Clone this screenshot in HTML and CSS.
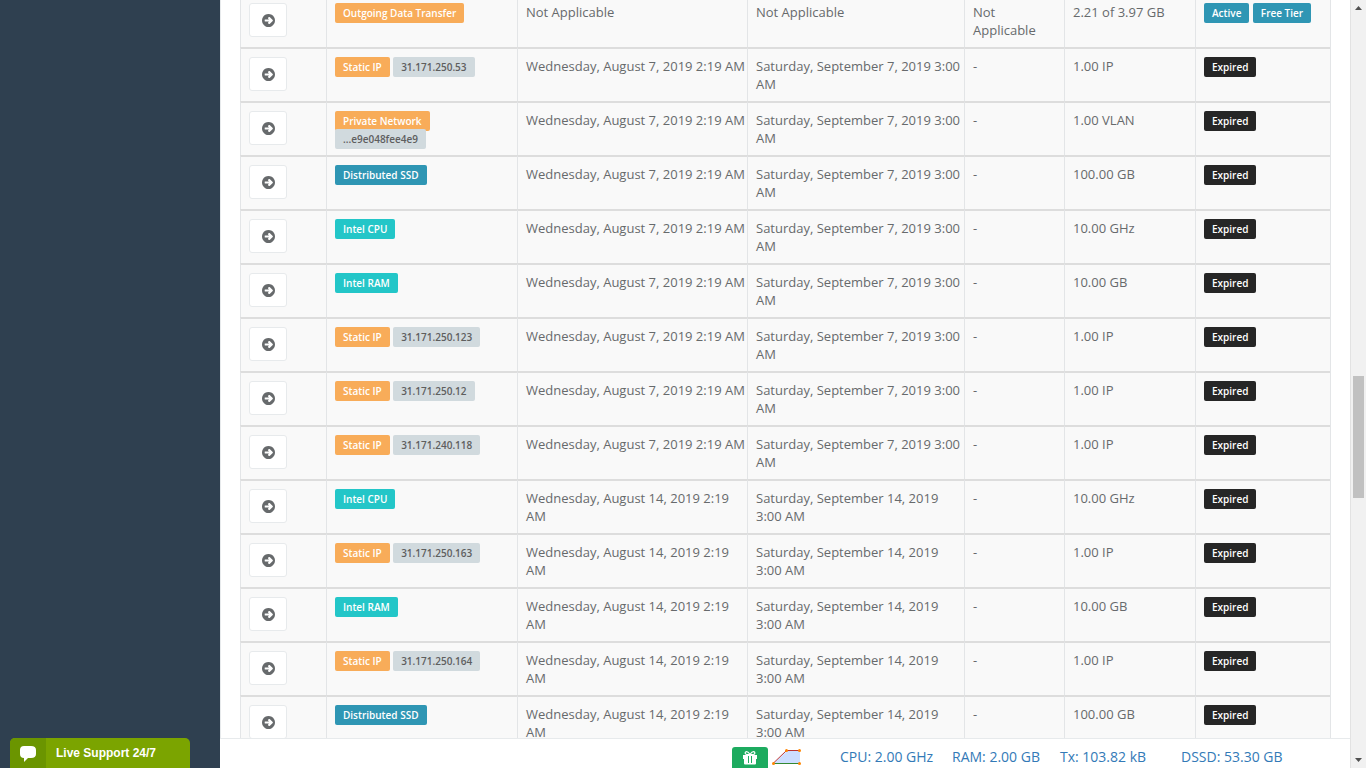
FILE: index.html
```html
<!DOCTYPE html>
<html lang="en">
<head>
<meta charset="utf-8">
<title>Subscriptions</title>
<link rel="stylesheet" href="styles.css">
</head>
<body>
<svg class="sprite" aria-hidden="true">
  <symbol id="arrow" viewBox="0 0 1536 1536"><path fill="currentColor" d="M1285 768q0-27-18-45L904 360q-18-18-45-18t-45 18l-91 91q-18 18-18 45t18 45l99 99H384q-26 0-45 19t-19 45v128q0 26 19 45t45 19h438l-99 99q-19 19-19 45t19 45l91 91q18 18 45 18t45-18l363-363q18-18 18-45zm251 0q0 209-103 385.500T1153.500 1433 768 1536t-385.500-103T103 1153.500 0 768t103-385.500T382.500 103 768 0t385.500 103T1433 382.500 1536 768z"/></symbol>
</svg>
<div class="app">
  <aside class="sidebar">
    <button class="support" type="button">
      <span class="support-icon"><svg width="18" height="16" viewBox="0 0 18 16" aria-hidden="true"><path fill="#fff" d="M5 0h7q5 0 5 4v4q0 4-5 4H9l-4 4v-4Q1 12 1 8V4q0-4 4-4z"/></svg></span>
      <span class="support-text">Live Support 24/7</span>
    </button>
  </aside>
  <div class="page">
    <main class="content">
      <table class="subs">
        <colgroup><col class="c-open"><col class="c-resource"><col class="c-start"><col class="c-end"><col class="c-renew"><col class="c-amount"><col class="c-status"></colgroup>
        <tbody>
          <tr><td><button class="open" type="button" aria-label="Open"><svg><use href="#arrow"/></svg></button></td><td><span class="label orange">Outgoing Data Transfer</span></td><td class="date">Not Applicable</td><td class="date">Not Applicable</td><td>Not Applicable</td><td>2.21 of 3.97 GB</td><td><span class="label blue">Active</span> <span class="label blue">Free Tier</span></td></tr>
          <tr><td><button class="open" type="button" aria-label="Open"><svg><use href="#arrow"/></svg></button></td><td><span class="label orange">Static IP</span> <span class="label grey">31.171.250.53</span></td><td class="date">Wednesday, August 7, 2019 2:19 AM</td><td class="date">Saturday, September 7, 2019 3:00 AM</td><td>-</td><td>1.00 IP</td><td><span class="label black">Expired</span></td></tr>
          <tr><td><button class="open" type="button" aria-label="Open"><svg><use href="#arrow"/></svg></button></td><td><span class="label orange">Private Network</span> <span class="label grey">...e9e048fee4e9</span></td><td class="date">Wednesday, August 7, 2019 2:19 AM</td><td class="date">Saturday, September 7, 2019 3:00 AM</td><td>-</td><td>1.00 VLAN</td><td><span class="label black">Expired</span></td></tr>
          <tr><td><button class="open" type="button" aria-label="Open"><svg><use href="#arrow"/></svg></button></td><td><span class="label blue">Distributed SSD</span></td><td class="date">Wednesday, August 7, 2019 2:19 AM</td><td class="date">Saturday, September 7, 2019 3:00 AM</td><td>-</td><td>100.00 GB</td><td><span class="label black">Expired</span></td></tr>
          <tr><td><button class="open" type="button" aria-label="Open"><svg><use href="#arrow"/></svg></button></td><td><span class="label teal">Intel CPU</span></td><td class="date">Wednesday, August 7, 2019 2:19 AM</td><td class="date">Saturday, September 7, 2019 3:00 AM</td><td>-</td><td>10.00 GHz</td><td><span class="label black">Expired</span></td></tr>
          <tr><td><button class="open" type="button" aria-label="Open"><svg><use href="#arrow"/></svg></button></td><td><span class="label teal">Intel RAM</span></td><td class="date">Wednesday, August 7, 2019 2:19 AM</td><td class="date">Saturday, September 7, 2019 3:00 AM</td><td>-</td><td>10.00 GB</td><td><span class="label black">Expired</span></td></tr>
          <tr><td><button class="open" type="button" aria-label="Open"><svg><use href="#arrow"/></svg></button></td><td><span class="label orange">Static IP</span> <span class="label grey">31.171.250.123</span></td><td class="date">Wednesday, August 7, 2019 2:19 AM</td><td class="date">Saturday, September 7, 2019 3:00 AM</td><td>-</td><td>1.00 IP</td><td><span class="label black">Expired</span></td></tr>
          <tr><td><button class="open" type="button" aria-label="Open"><svg><use href="#arrow"/></svg></button></td><td><span class="label orange">Static IP</span> <span class="label grey">31.171.250.12</span></td><td class="date">Wednesday, August 7, 2019 2:19 AM</td><td class="date">Saturday, September 7, 2019 3:00 AM</td><td>-</td><td>1.00 IP</td><td><span class="label black">Expired</span></td></tr>
          <tr><td><button class="open" type="button" aria-label="Open"><svg><use href="#arrow"/></svg></button></td><td><span class="label orange">Static IP</span> <span class="label grey">31.171.240.118</span></td><td class="date">Wednesday, August 7, 2019 2:19 AM</td><td class="date">Saturday, September 7, 2019 3:00 AM</td><td>-</td><td>1.00 IP</td><td><span class="label black">Expired</span></td></tr>
          <tr><td><button class="open" type="button" aria-label="Open"><svg><use href="#arrow"/></svg></button></td><td><span class="label teal">Intel CPU</span></td><td class="date">Wednesday, August 14, 2019 2:19 AM</td><td class="date">Saturday, September 14, 2019 3:00 AM</td><td>-</td><td>10.00 GHz</td><td><span class="label black">Expired</span></td></tr>
          <tr><td><button class="open" type="button" aria-label="Open"><svg><use href="#arrow"/></svg></button></td><td><span class="label orange">Static IP</span> <span class="label grey">31.171.250.163</span></td><td class="date">Wednesday, August 14, 2019 2:19 AM</td><td class="date">Saturday, September 14, 2019 3:00 AM</td><td>-</td><td>1.00 IP</td><td><span class="label black">Expired</span></td></tr>
          <tr><td><button class="open" type="button" aria-label="Open"><svg><use href="#arrow"/></svg></button></td><td><span class="label teal">Intel RAM</span></td><td class="date">Wednesday, August 14, 2019 2:19 AM</td><td class="date">Saturday, September 14, 2019 3:00 AM</td><td>-</td><td>10.00 GB</td><td><span class="label black">Expired</span></td></tr>
          <tr><td><button class="open" type="button" aria-label="Open"><svg><use href="#arrow"/></svg></button></td><td><span class="label orange">Static IP</span> <span class="label grey">31.171.250.164</span></td><td class="date">Wednesday, August 14, 2019 2:19 AM</td><td class="date">Saturday, September 14, 2019 3:00 AM</td><td>-</td><td>1.00 IP</td><td><span class="label black">Expired</span></td></tr>
          <tr><td><button class="open" type="button" aria-label="Open"><svg><use href="#arrow"/></svg></button></td><td><span class="label blue">Distributed SSD</span></td><td class="date">Wednesday, August 14, 2019 2:19 AM</td><td class="date">Saturday, September 14, 2019 3:00 AM</td><td>-</td><td>100.00 GB</td><td><span class="label black">Expired</span></td></tr>
        </tbody>
      </table>
    </main>
    <footer class="footer">
      <button class="gift" type="button" aria-label="Rewards"><svg width="14" height="14" viewBox="0 0 14 14" aria-hidden="true"><path fill="#fff" fill-rule="evenodd" d="M0 4h3.500Q1.500 3.500 1.500 2T3.500 0Q5.500 0 7 2.500 8.500 0 10.500 0t2 2-2 2H14v4h-1v4.500q0 1-1 1H2q-1 0-1-1V8H0zM3.700 1.300q-1 0-1 .8t1 .8H6Q4.800 1.300 3.700 1.300zm6.600 0Q9.200 1.300 8 2.900h2.300q1 0 1-.8t-1-.8zM5 5v7h1V5zm3 0v7h1V5z"/></svg></button>
      <svg class="spark" width="30" height="18" viewBox="0 0 30 18" aria-hidden="true"><path fill="#cdf" d="M1 16 15 3h13v13z"/><path fill="none" stroke="#b33" d="M1 15.500 14.500 2.500H28"/><path stroke="#383" d="M1 15.500h27"/><g fill="#ff8500"><circle cx="1.500" cy="15.500" r="1.500"/><circle cx="14.500" cy="2.500" r="1.500"/><circle cx="27.500" cy="2.500" r="1.500"/><circle cx="27.500" cy="15.500" r="1.500"/></g></svg>
      <a class="stat" href="#cpu">CPU: 2.00 GHz</a>
      <a class="stat" href="#ram">RAM: 2.00 GB</a>
      <a class="stat" href="#tx">Tx: 103.82 kB</a>
      <a class="stat" href="#dssd">DSSD: 53.30 GB</a>
    </footer>
  </div>
  <div class="scrollbar" aria-hidden="true">
    <svg width="7" height="4" viewBox="0 0 7 4"><path fill="#505050" d="M0 4 3.500 0 7 4z"/></svg>
    <div class="track"><div class="thumb"></div></div>
    <svg width="7" height="4" viewBox="0 0 7 4"><path fill="#505050" d="M0 0h7L3.500 4z"/></svg>
  </div>
</div>
</body>
</html>
```
FILE: styles.css
```css
* { box-sizing: border-box; }

body {
  margin: 0;
  background: #fff;
  color: #676a6c;
  font: 13px/18px "Open Sans", sans-serif;
}

button { font: inherit; cursor: pointer; }

.sprite { display: none; }

.app {
  display: flex;
  height: 100vh;
  overflow: hidden;
}

.sidebar {
  display: flex;
  flex: 0 0 220px;
  align-items: flex-end;
  padding: 0 30px 0 10px;
  background: #2f4050;
}

.support {
  display: flex;
  width: 100%;
  height: 30px;
  padding: 0;
  overflow: hidden;
  border: 0;
  border-radius: 5px 5px 0 0;
  background: #7ba400;
  color: #fff;
  font: bold 12px/30px "Liberation Sans", sans-serif;
}

.support-icon {
  display: flex;
  align-items: center;
  justify-content: center;
  width: 36px;
  height: 30px;
  padding-top: 2px;
  background: #6b9500;
}

.support-text { padding-left: 10px; }

.page {
  display: flex;
  flex: 1;
  flex-direction: column;
  min-width: 0;
  border-right: 1px solid #e2e2e2;
}

.content {
  flex: 1;
  min-height: 0;
  padding: 0 19px;
  overflow: hidden;
  border-left: 1px solid #e7eaec;
}

/* The list is scrolled a little past the top of its first row. */
.subs {
  width: 100%;
  margin-top: -7px;
  table-layout: fixed;
  border-spacing: 0;
  border-right: 1px solid #e3e5e7;
  background: #f9f9f9;
}

.c-open { width: 86px; }
.c-resource { width: 191px; }
.c-start { width: 230px; }
.c-end { width: 217px; }
.c-renew { width: 100px; }
.c-amount { width: 131px; }
.c-status { width: 135px; }

.subs td {
  height: 54px;
  padding: 8px;
  border-top: 2px solid #ddd;
  border-left: 1px solid #e3e5e7;
  vertical-align: top;
}

.subs .date { padding-right: 0; }

.open {
  display: flex;
  align-items: center;
  justify-content: center;
  width: 38px;
  height: 34px;
  padding: 0;
  border: 1px solid #e7eaec;
  border-radius: 3px;
  background: #fff;
  color: #676a6c;
}

.open svg { width: 13px; height: 13px; }

.label {
  padding: 3px 8px;
  border-radius: 2px;
  color: #fff;
  font-size: 10px;
  font-weight: 600;
  line-height: 10px;
  white-space: nowrap;
}

.orange { background: #f8ac59; }
.blue { background: #2f96b4; }
.teal { background: #23c6c8; }
.black { background: #262626; }
.grey { background: #d1dade; color: #5e5e5e; }

.footer {
  display: grid;
  flex: 0 0 30px;
  grid-template-columns: 40px 68px 112px 108px 121px 103px;
  justify-content: end;
  align-items: center;
  padding-right: 66px;
  padding-top: 6px;
  border-top: 1px solid #e7eaec;
}

.gift {
  display: flex;
  align-self: end;
  align-items: center;
  justify-content: center;
  width: 36px;
  height: 21px;
  padding: 0;
  border: 0;
  border-radius: 3px 3px 0 0;
  background: #1dab5f;
}

.stat {
  color: #337ab7;
  font-size: 14px;
  text-decoration: none;
  white-space: nowrap;
}

.scrollbar {
  display: flex;
  flex: 0 0 15px;
  flex-direction: column;
  align-items: center;
  justify-content: space-between;
  padding: 6px 0;
  background: #f1f1f1;
}

.track {
  flex: 1;
  padding-top: 366px;
}

.thumb {
  width: 11px;
  height: 122px;
  background: #c1c1c1;
}
```
